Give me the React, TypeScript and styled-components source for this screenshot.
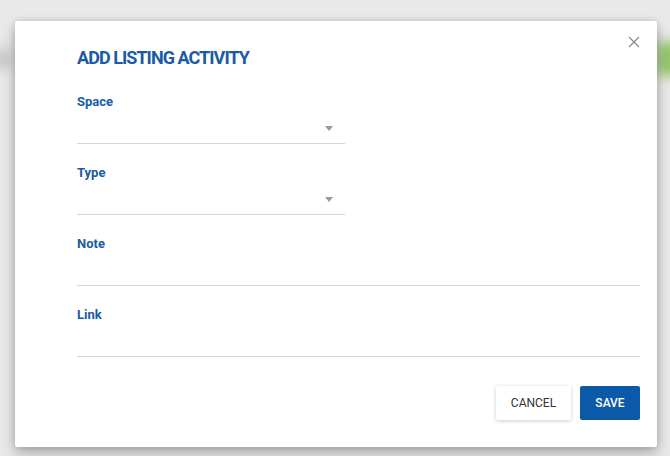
import React from "react";
import styled, { createGlobalStyle } from "styled-components";

const Global = createGlobalStyle`
  html, body { margin: 0; padding: 0; }
  body { font-family: Roboto, "Liberation Sans", Arial, sans-serif; background: #ececec; }
  * { box-sizing: border-box; }
`;

const Backdrop = styled.div`
  position: relative;
  width: 670px;
  height: 456px;
  overflow: hidden;
  background: #e9e9e9;
  padding: 21px 13px 9px 15px;
`;

const Blur = styled.div<{ $top: number; $left: number; $w: number; $h: number; $c: string }>`
  position: absolute;
  top: ${(p) => p.$top}px;
  left: ${(p) => p.$left}px;
  width: ${(p) => p.$w}px;
  height: ${(p) => p.$h}px;
  background: ${(p) => p.$c};
  filter: blur(6px);
  border-radius: 8px;
`;

const Modal = styled.div`
  position: relative;
  height: 100%;
  background: #ffffff;
  border-radius: 2px;
  box-shadow: 0 6px 14px rgba(0, 0, 0, 0.28), 0 0 6px rgba(0, 0, 0, 0.12);
  padding: 25px 17px 27px 62px;
  display: flex;
  flex-direction: column;
`;

const Close = styled.button`
  position: absolute;
  top: 15px;
  right: 17px;
  width: 12px;
  height: 12px;
  padding: 0;
  border: none;
  background: none;
  display: flex;
  cursor: pointer;
`;

const Title = styled.h2`
  margin: 0 0 24px;
  font-size: 18px;
  line-height: 24px;
  font-weight: 700;
  color: #1a5aa6;
  letter-spacing: -0.95px;
`;

const Field = styled.div<{ $narrow?: boolean }>`
  width: ${(p) => (p.$narrow ? "268px" : "100%")};
  margin-bottom: 21px;
`;

const Label = styled.div`
  font-size: 13px;
  line-height: 16px;
  font-weight: 700;
  color: #1a5aa6;
`;

const InputArea = styled.div`
  position: relative;
  height: 34px;
  border-bottom: 1px solid #d6d6d6;
`;

const Arrow = styled.span`
  position: absolute;
  right: 12px;
  top: 16px;
  width: 0;
  height: 0;
  border-left: 4.5px solid transparent;
  border-right: 4.5px solid transparent;
  border-top: 5px solid #9a9a9a;
`;

const Actions = styled.div`
  display: flex;
  justify-content: flex-end;
  gap: 9px;
  margin-top: 8px;
`;

const Button = styled.button<{ $primary?: boolean }>`
  height: 34px;
  padding: 0;
  width: ${(p) => (p.$primary ? "60px" : "75px")};
  border: none;
  border-radius: 2px;
  font-family: Roboto, "Liberation Sans", Arial, sans-serif;
  font-size: 12px;
  font-weight: ${(p) => (p.$primary ? 500 : 400)};
  color: ${(p) => (p.$primary ? "#ffffff" : "#333333")};
  background: ${(p) => (p.$primary ? "#0b5aa9" : "#ffffff")};
  box-shadow: ${(p) => (p.$primary ? "none" : "0 1px 4px rgba(0,0,0,0.2)")};
  cursor: pointer;
`;

const fields: { label: string; select: boolean }[] = [
  { label: "Space", select: true },
  { label: "Type", select: true },
  { label: "Note", select: false },
  { label: "Link", select: false },
];

export default function App() {
  return (
    <>
      <Global />
      <Backdrop>
        <Blur $top={48} $left={-10} $w={22} $h={22} $c="#c9c9c9" />
        <Blur $top={42} $left={656} $w={30} $h={34} $c="#95c56a" />
        <Modal>
          <Close aria-label="Close">
            <svg width="12" height="12" viewBox="0 0 12 12">
              <path d="M1 1 L11 11 M11 1 L1 11" stroke="#8a8a8a" strokeWidth="1.2" fill="none" />
            </svg>
          </Close>
          <Title>ADD LISTING ACTIVITY</Title>
          {fields.map((f) => (
            <Field key={f.label} $narrow={f.select}>
              <Label>{f.label}</Label>
              <InputArea>{f.select && <Arrow />}</InputArea>
            </Field>
          ))}
          <Actions>
            <Button>CANCEL</Button>
            <Button $primary>SAVE</Button>
          </Actions>
        </Modal>
      </Backdrop>
    </>
  );
}
